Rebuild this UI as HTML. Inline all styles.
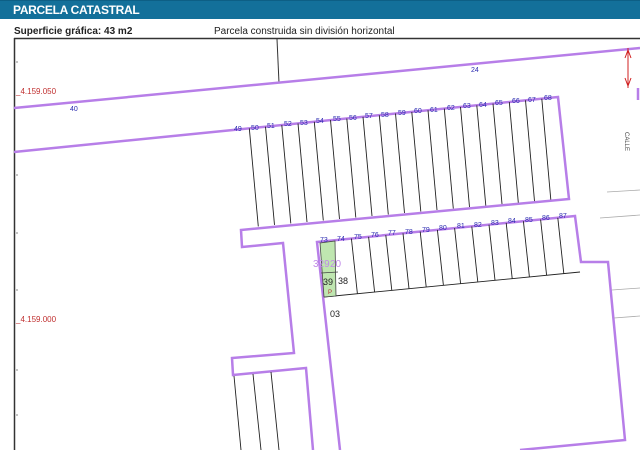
<!DOCTYPE html>
<html><head><meta charset="utf-8"><style>
html,body{margin:0;padding:0;width:640px;height:450px;overflow:hidden;background:#fff;font-family:"Liberation Sans",sans-serif}
.hd{position:absolute;left:0;top:0;width:640px;height:18px;background:#13709a;border-top:1px solid #0d5f85}
.hd span{position:absolute;left:13px;top:2px;color:#fff;font-weight:bold;font-size:12px;letter-spacing:-0.3px}
.a{position:absolute;top:26px;left:14px;font-size:10px;font-weight:bold;color:#222}
.b{position:absolute;top:26px;left:214px;font-size:10px;color:#222}
svg{position:absolute;left:0;top:0}
</style></head><body>
<div class="hd"><span>PARCELA CATASTRAL</span></div>
<div class="a">Superficie gráfica: 43 m2</div>
<div class="b">Parcela construida sin división horizontal</div>
<svg width="640" height="450" viewBox="0 0 640 450" font-family="Liberation Sans, sans-serif">
<line x1="14" y1="38.5" x2="640" y2="38.5" stroke="#333" stroke-width="1.5"/>
<line x1="14.5" y1="38" x2="14.5" y2="450" stroke="#333" stroke-width="1.5"/>
<g stroke="#888" stroke-width="1"><line x1="16" y1="62" x2="18" y2="62"/><line x1="16" y1="175" x2="18" y2="175"/><line x1="16" y1="233" x2="18" y2="233"/><line x1="16" y1="290" x2="18" y2="290"/><line x1="16" y1="370" x2="18" y2="370"/><line x1="16" y1="415" x2="18" y2="415"/></g>
<line x1="277" y1="39" x2="279" y2="83" stroke="#333" stroke-width="1"/>
<g fill="none" stroke="#b77ee8" stroke-width="2.5">
<polyline points="14,108 640,48"/>
<polyline points="14,152 233,130 558,97 569,199 241,230 242,247 283,243 294,353 232,358 233,375 306,368 313,450"/>
<polyline points="340,450 317,242 575,216 581,262 608,262 625,440 520,450"/>
<polyline points="638,88 638,100"/>
</g>
<g stroke="#222" stroke-width="0.9">
<line x1="249.3" y1="128.3" x2="258.3" y2="226.4"/><line x1="265.5" y1="126.7" x2="274.5" y2="224.9"/><line x1="281.8" y1="125.1" x2="290.8" y2="223.4"/><line x1="298" y1="123.4" x2="307" y2="222"/><line x1="314.3" y1="121.8" x2="323.3" y2="220.5"/><line x1="330.5" y1="120.1" x2="339.5" y2="219"/><line x1="346.8" y1="118.5" x2="355.8" y2="217.5"/><line x1="363" y1="116.8" x2="372" y2="216"/><line x1="379.3" y1="115.2" x2="388.3" y2="214.5"/><line x1="395.5" y1="113.5" x2="404.5" y2="213"/><line x1="411.8" y1="111.9" x2="420.8" y2="211.5"/><line x1="428" y1="110.2" x2="437" y2="210"/><line x1="444.3" y1="108.6" x2="453.3" y2="208.5"/><line x1="460.5" y1="106.9" x2="469.5" y2="207"/><line x1="476.8" y1="105.3" x2="485.8" y2="205.6"/><line x1="493" y1="103.6" x2="502" y2="204"/><line x1="509.3" y1="102" x2="518.3" y2="202.6"/><line x1="525.5" y1="100.3" x2="534.5" y2="201.1"/><line x1="541.8" y1="98.7" x2="550.8" y2="199.6"/>
<line x1="324" y1="297" x2="580" y2="272"/>
<line x1="351.4" y1="238.5" x2="357.4" y2="293.7"/><line x1="368.6" y1="236.8" x2="374.6" y2="292.1"/><line x1="385.8" y1="235.1" x2="391.8" y2="290.4"/><line x1="403" y1="233.3" x2="409" y2="288.7"/><line x1="420.2" y1="231.6" x2="426.2" y2="287"/><line x1="437.4" y1="229.9" x2="443.4" y2="285.3"/><line x1="454.6" y1="228.1" x2="460.6" y2="283.7"/><line x1="471.8" y1="226.4" x2="477.8" y2="282"/><line x1="489" y1="224.7" x2="495" y2="280.3"/><line x1="506.2" y1="222.9" x2="512.2" y2="278.6"/><line x1="523.4" y1="221.2" x2="529.4" y2="276.9"/><line x1="540.6" y1="219.5" x2="546.6" y2="275.3"/><line x1="557.8" y1="217.8" x2="563.8" y2="273.6"/>
<line x1="234" y1="376" x2="241" y2="450"/><line x1="253" y1="374" x2="261" y2="450"/><line x1="271" y1="372" x2="279" y2="450"/>
</g>
<g stroke="#aaa" stroke-width="0.8"><line x1="600" y1="218" x2="640" y2="215"/><line x1="607" y1="192" x2="640" y2="190"/><line x1="612" y1="290" x2="640" y2="288"/><line x1="614" y1="318" x2="640" y2="316"/></g>
<polygon points="320,243 335,241 336,296 324,297" fill="#bfe6b0" stroke="#444" stroke-width="0.8"/>
<line x1="321" y1="273" x2="338" y2="272" stroke="#444" stroke-width="0.8"/>
<g font-size="7" fill="#2a2ab0">
<text x="234" y="131">49</text><text x="251" y="130">50</text><text x="267" y="128">51</text><text x="284" y="126">52</text><text x="300" y="125">53</text><text x="316" y="123">54</text><text x="333" y="121">55</text><text x="349" y="120">56</text><text x="365" y="118">57</text><text x="381" y="117">58</text><text x="398" y="115">59</text><text x="414" y="113">60</text><text x="430" y="112">61</text><text x="447" y="110">62</text><text x="463" y="108">63</text><text x="479" y="107">64</text><text x="495" y="105">65</text><text x="512" y="103">66</text><text x="528" y="102">67</text><text x="544" y="100">68</text>
<text x="320" y="242">73</text><text x="337" y="241">74</text><text x="354" y="239">75</text><text x="371" y="237">76</text><text x="388" y="235">77</text><text x="405" y="234">78</text><text x="422" y="232">79</text><text x="439" y="230">80</text><text x="457" y="228">81</text><text x="474" y="227">82</text><text x="491" y="225">83</text><text x="508" y="223">84</text><text x="525" y="222">85</text><text x="542" y="220">86</text><text x="559" y="218">87</text>
<text x="471" y="72">24</text><text x="70" y="111">40</text>
</g>
<text x="16" y="94" font-size="8" fill="#c03030">_4.159.050</text>
<text x="16" y="322" font-size="8" fill="#c03030">_4.159.000</text>
<text x="313" y="267" font-size="10" fill="#c08ae8">329</text><text x="330" y="267" font-size="10" fill="#c08ae8">20</text>
<text x="323" y="285" font-size="9" fill="#222">39</text><text x="338" y="284" font-size="9" fill="#222">38</text>
<text x="328" y="294" font-size="6" fill="#b03030">P</text>
<text x="330" y="317" font-size="9" fill="#222">03</text>
<text x="617" y="130" font-size="6" fill="#444" transform="rotate(90 620 135)">CALLE</text>
<text x="633" y="333" font-size="6" fill="#444" transform="rotate(90 636 340)">SUR</text>
<g stroke="#d02020" fill="none" stroke-width="1"><line x1="628" y1="48" x2="628" y2="88"/><polyline points="625,58 628,50 631,58"/><polyline points="625,78 628,86 631,78"/></g>
</svg>
</body></html>
